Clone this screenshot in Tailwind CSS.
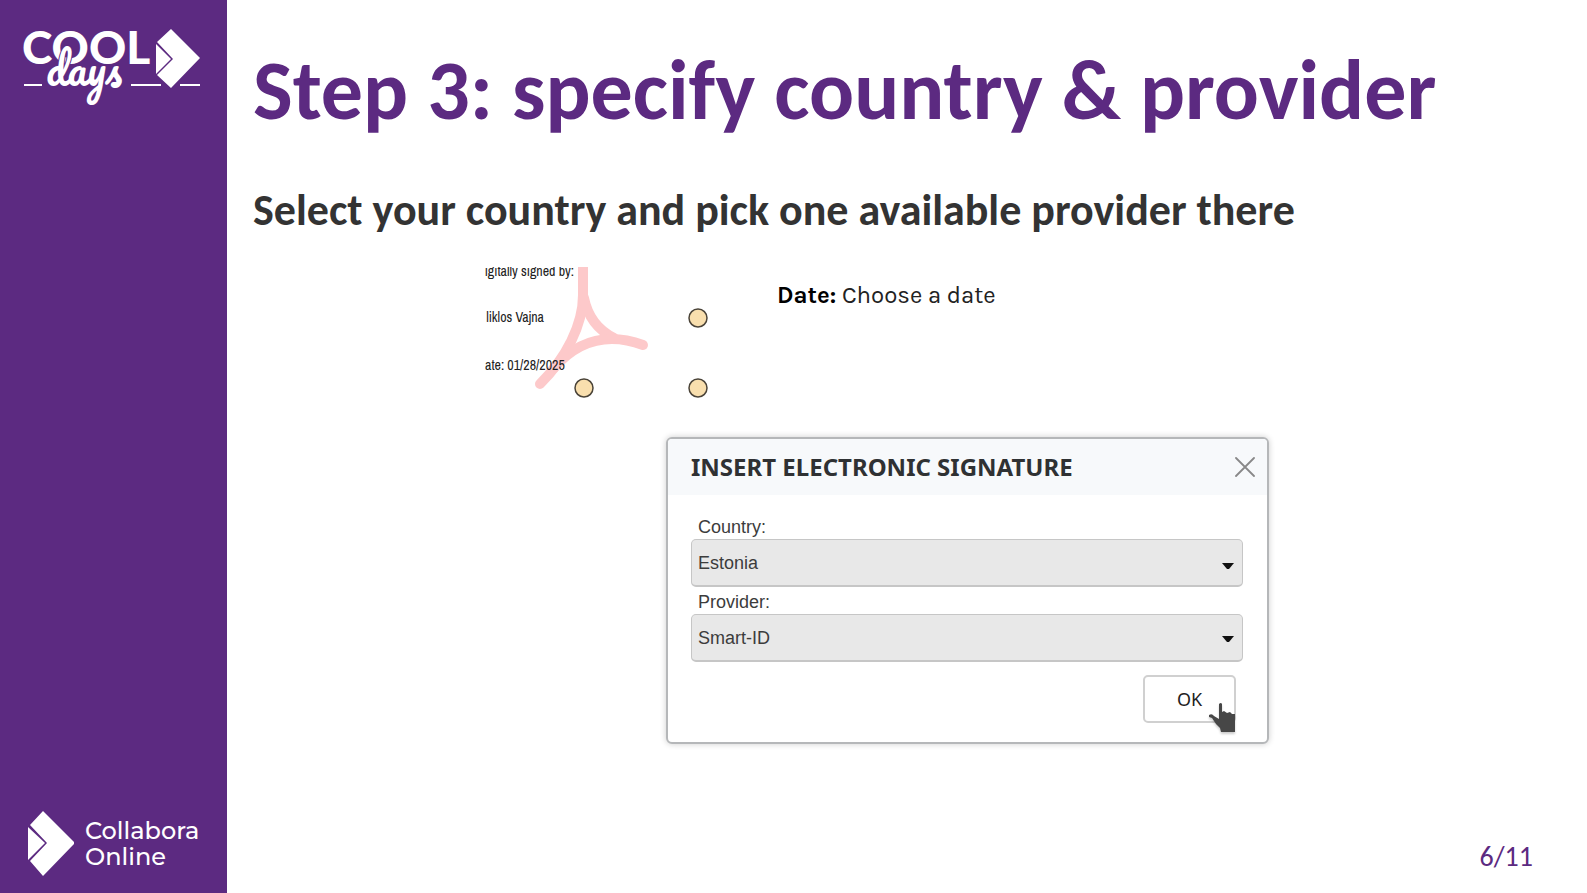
<!DOCTYPE html>
<html lang="en">
<head>
<meta charset="utf-8">
<meta name="viewport" content="width=device-width, initial-scale=1">
<title>Step 3: specify country &amp; provider</title>
<script src="https://cdn.jsdelivr.net/npm/@tailwindcss/browser@4"></script>
</head>
<body class="flex min-h-screen bg-white font-[Carlito,Lato,sans-serif]">
<aside class="flex w-[227px] shrink-0 flex-col justify-between bg-[#5c2a81] px-6 pt-7 pb-4">
  <svg class="h-[76px] w-[178px] overflow-visible" viewBox="24 28 178 76" role="img" aria-label="COOL days" fill="#fff">
    <text x="22" y="64" font-family="Lato, sans-serif" font-weight="900" font-size="46">COOL</text>
    <path d="M24 84h18v2H24zM131 84h30v2h-30zM180 84h20v2h-20z"/>
    <path d="M157 42 171 29 200 58 171 88 157 75 173 59z"/>
    <path d="M156 44 171 59 156 74z"/>
    <text x="46" y="86" font-family="Pacifico, Lobster, 'Dancing Script', Lato, cursive" font-size="42" stroke="#5c2a81" stroke-width="2" paint-order="stroke">days</text>
  </svg>
  <div class="flex items-center gap-[11px] pl-1 text-white">
    <svg class="h-[66px] w-[46px]" viewBox="28 811 46 66" fill="#fff" aria-hidden="true">
      <path d="M30 825 43 811 75 843 43 876 30 861 47 843z"/>
      <path d="M28 827 45 843 28 860z"/>
    </svg>
    <p class="font-[Montserrat,Inter,sans-serif] text-2xl leading-[26px] font-medium">Collabora<br>Online</p>
  </div>
</aside>
<main class="relative min-w-0 flex-1 pt-12 pl-[26px]">
  <h1 class="text-[84px] leading-[86px] font-bold whitespace-nowrap text-[#5c2a81]">Step 3: specify country &amp; provider</h1>
  <h2 class="mt-[50px] text-[44px] leading-[52px] font-bold whitespace-nowrap text-[#333]">Select your country and pick one available provider there</h2>
  <section class="mt-[31px] ml-[232px]" aria-label="Document">
    <div class="flex gap-[62px]">
      <svg class="h-[140px] w-[230px]" viewBox="485 267 230 140" role="img" aria-label="Signature stamp">
        <g fill="none" stroke="#fdc9ca" stroke-width="10" stroke-linecap="round">
          <path d="M583 260V295C583 325 566 358 540 384"/>
          <path d="M584 298C588 318 598 330 614 338"/>
          <path d="M554 368C580 338 610 333 643 345"/>
        </g>
        <g font-family="'Liberation Sans Narrow', 'Archivo Narrow', 'PT Sans Narrow', 'Roboto Condensed', 'Liberation Sans', sans-serif" font-size="14" fill="#222">
          <text x="574" y="276" text-anchor="end">igitally signed by:</text>
          <text x="544" y="322" text-anchor="end">liklos Vajna</text>
          <text x="485" y="370">ate: 01/28/2025</text>
        </g>
        <g fill="#f9dfae" stroke="#4a4338" stroke-width="1.5">
          <circle cx="698" cy="318" r="9"/><circle cx="584" cy="388" r="9"/><circle cx="698" cy="388" r="9"/>
        </g>
      </svg>
      <p class="mt-3 font-[Karla,Inter,sans-serif] text-2xl leading-8 whitespace-nowrap text-[#222]"><b class="font-bold text-black">Date:</b> Choose a date</p>
    </div>
    <form class="mt-[30px] ml-[181px] w-[603px] rounded-md border-2 border-[#b5b7b9] bg-white font-['Liberation_Sans',sans-serif] text-lg text-[#3c3c3c] shadow-[0_0_6px_rgba(0,0,0,0.2)]" onsubmit="return false">
      <header class="flex h-14 items-center justify-between rounded-t bg-[#f7f9fb] pr-3 pl-[23px]">
        <h3 class="font-['Noto_Sans',sans-serif] text-2xl leading-8 font-bold whitespace-nowrap text-[#2f3133]">INSERT ELECTRONIC SIGNATURE</h3>
        <button type="button" aria-label="Close" class="size-5">
          <svg viewBox="0 0 20 20" fill="none" stroke="#888" stroke-width="1.8" stroke-linecap="round"><path d="M1 1 19 19M19 1 1 19"/></svg>
        </button>
      </header>
      <div class="flex flex-col pt-5 pr-6 pb-[19px] pl-[23px]">
        <label for="country" class="pl-[7px] leading-6">Country:</label>
        <div class="relative">
          <select id="country" class="h-12 w-full appearance-none rounded-[5px] border border-b-2 border-[#c6c6c6] bg-[#e8e8e8] px-[6px]"><option>Estonia</option></select>
          <svg class="pointer-events-none absolute top-6 right-[9px] h-[6px] w-3" viewBox="0 0 12 6" fill="#111" aria-hidden="true"><path d="M0 0H12L7 6H5z"/></svg>
        </div>
        <label for="provider" class="mt-1 pl-[7px] leading-[23px]">Provider:</label>
        <div class="relative">
          <select id="provider" class="h-12 w-full appearance-none rounded-[5px] border border-b-2 border-[#c6c6c6] bg-[#e8e8e8] px-[6px]"><option>Smart-ID</option></select>
          <svg class="pointer-events-none absolute top-[22px] right-[9px] h-[6px] w-3" viewBox="0 0 12 6" fill="#111" aria-hidden="true"><path d="M0 0H12L7 6H5z"/></svg>
        </div>
        <div class="relative mt-[13px] mr-[7px] self-end">
          <button type="submit" class="block h-12 w-[93px] rounded-[5px] border-2 border-[#d0d0d0] bg-white font-['Noto_Sans',sans-serif] text-lg text-[#222]">OK</button>
          <svg class="pointer-events-none absolute -right-0.5 -bottom-[11px] h-8 w-[30px] drop-shadow-[0_2px_1px_rgba(0,0,0,0.2)]" viewBox="0 0 30 32" fill="#474747" aria-hidden="true"><path d="M11 2q2-2 3 0v8l2-1 3 2 3-1 2 2 3 0v18H13l-1-4-4-4-4-6-3-1v-2q3-2 5 1l5 3z"/></svg>
        </div>
      </div>
    </form>
  </section>
  <p class="absolute right-[54px] bottom-5 text-[28px] leading-8 text-[#5c2a81]">6/11</p>
</main>
</body>
</html>
